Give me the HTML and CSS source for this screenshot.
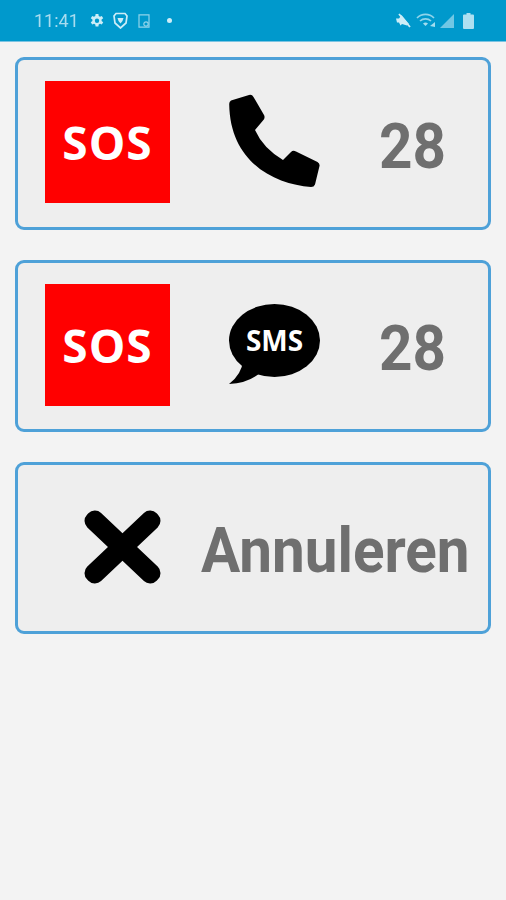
FILE: index.html
```html
<!DOCTYPE html>
<html lang="nl">
<head>
<meta charset="utf-8">
<title>SOS</title>
<link rel="stylesheet" href="styles.css">
</head>
<body>
<header class="status">
  <div class="status-group">
    <span class="time">11:41</span>
    <svg class="ic ic-gear" viewBox="0 0 14 14"><path fill-rule="evenodd" d="M5.600 0h2.800l.3 2 1.300.7 1.800-.8 1.400 2.400-1.600 1.200v1.500l1.600 1.200-1.400 2.400-1.800-.8-1.300.7-.3 2H5.600l-.3-2-1.300-.7-1.800.8L.8 8.200l1.600-1.200V5.500L.8 4.300l1.400-2.400 1.800.8 1.300-.7zM7 4.600a2.200 2.200 0 1 0 0 4.400 2.200 2.200 0 0 0 0-4.400z"/></svg>
    <svg class="ic ic-shield" viewBox="0 0 15 17"><path class="line" stroke-width="1.700" d="M3 1.500h9l2 2.500-1 7-5.500 5-5.500-5-1-7z"/><path d="M4.500 6h6l-1 3-2 2.500-2-2.500z"/></svg>
    <svg class="ic ic-doc" viewBox="0 0 12 14"><path class="line" stroke-width="1.200" d="M1 .8h10v12.400H1z"/><circle class="line" cx="8" cy="10" r="2.200" stroke-width="1.200"/></svg>
    <span class="dot"></span>
  </div>
  <div class="status-group right">
    <svg class="ic ic-mute" viewBox="0 0 15 15"><path d="M0 5.500h3l2.500-3.500 7.500 9-2 1.500-5-1.500-1.500 1.500-1.500-3H1z"/><path stroke-width="1.800" d="M3 1l11 13"/></svg>
    <svg class="ic ic-wifi" viewBox="0 0 20 15"><path class="line" stroke-width="1.700" opacity=".7" d="M1 5a12 12 0 0 1 17 0M4 8a8 8 0 0 1 11 0"/><path opacity=".8" d="M7 10.500a4 4 0 0 1 5 0L9.500 13z"/><path d="M14 13l5-4v5z" opacity=".8"/></svg>
    <svg class="ic ic-signal" viewBox="0 0 14 14"><path opacity=".55" d="M0 14L14 0v14z"/></svg>
    <svg class="ic ic-batt" viewBox="0 0 11 16"><path d="M3.500 0h4v1.500H10a1 1 0 0 1 1 1V15a1 1 0 0 1-1 1H1a1 1 0 0 1-1-1V2.500a1 1 0 0 1 1-1h2.500z"/></svg>
  </div>
</header>
<main class="list">
  <div class="card card-first">
    <div class="sos"><span>SOS</span></div>
    <svg class="icon-phone" viewBox="0 0 91 93"><path d="M2 6.500L20 1Q23 .2 24.500 3L35 21Q36.500 24 34 26.500L26 36Q34 54 54 66L62 58Q64 56 67 57.500L88.500 68Q91 69.500 90.500 72L86 90.500Q85 93 82 93C45 90 1 68 .2 10Q.2 7.500 2 6.500Z"/></svg>
    <span class="label">28</span>
  </div>
  <div class="card">
    <div class="sos"><span>SOS</span></div>
    <svg class="icon-sms" viewBox="0 0 91 80"><ellipse cx="45.500" cy="36.500" rx="45.500" ry="36.500"/><path d="M14 56Q13 70 0 80Q20 79 32 68Z"/><text class="sms-text" x="45.500" y="47" text-anchor="middle">SMS</text></svg>
    <span class="label">28</span>
  </div>
  <div class="card card-cancel">
    <svg class="icon-x" viewBox="0 0 77 74"><rect x="-9.500" y="27" width="96" height="20" rx="9" transform="rotate(43.500 38.500 37)"/><rect x="-9.500" y="27" width="96" height="20" rx="9" transform="rotate(-43.500 38.500 37)"/></svg>
    <span class="label">Annuleren</span>
  </div>
</main>
</body>
</html>
```
FILE: styles.css
```css
* { box-sizing: border-box; }
html, body { margin: 0; padding: 0; }
body {
  width: 506px;
  height: 900px;
  background: #f3f3f3;
  font-family: Roboto, "Liberation Sans", sans-serif;
  overflow: hidden;
}
.status {
  height: 42px;
  background: #0099cc;
  border-bottom: 1px solid #7cc4e2;
  display: flex;
  justify-content: space-between;
  align-items: center;
  padding: 0 32px 0 34px;
}
.status-group { display: flex; align-items: center; filter: blur(.6px); }
.time { color: #a8dcef; font-size: 18px; width: 56px; }
.ic { display: block; fill: #cdedf7; stroke: #cdedf7; stroke-width: 0; }
.line { fill: none; }
.ic-gear { width: 14px; height: 14px; margin-right: 9px; }
.ic-shield { width: 15px; height: 17px; margin-right: 10px; }
.ic-doc { width: 12px; height: 14px; margin-right: 17px; opacity: .7; }
.dot { width: 5px; height: 5px; border-radius: 50%; background: #cdedf7; }
.ic-mute { width: 15px; height: 15px; margin-right: 5px; }
.ic-wifi { width: 20px; height: 15px; margin-right: 4px; }
.ic-signal { width: 14px; height: 14px; margin-right: 9px; }
.ic-batt { width: 11px; height: 16px; opacity: .85; }
.list {
  display: flex;
  flex-direction: column;
  gap: 30px;
  padding: 15px 15px 0;
}
.card {
  height: 172px;
  background: #eeeeee;
  border: 3px solid #4ea1d8;
  border-radius: 9px;
  display: flex;
  align-items: center;
  padding-left: 27px;
}
.card-first { height: 173px; }
.card-cancel { padding-left: 66px; }
.sos {
  width: 125px;
  height: 122px;
  background: #ff0000;
  display: flex;
  align-items: center;
  justify-content: center;
  flex: none;
  margin-bottom: 2px;
}
.card-first .sos { margin-bottom: 4px; }
.sos span {
  color: #ffffff;
  font: 700 46px "Open Sans", sans-serif;
  letter-spacing: 1px;
}
.icon-phone { width: 91px; height: 93px; margin-left: 59px; margin-right: 59px; flex: none; margin-top: -6px; }
.icon-sms { width: 91px; height: 80px; margin-left: 59px; margin-right: 59px; flex: none; margin-top: -4px; }
.icon-x { width: 77px; height: 74px; margin-right: 40px; flex: none; margin-bottom: 2px; }
.sms-text { fill: #fff; font: 700 28px "Open Sans", sans-serif; }
.label {
  color: #6f6f6f;
  font-size: 58.400px;
  font-weight: 700;
  white-space: nowrap;
  margin-top: 6px;
  transform: scaleY(1.07);
}
```
